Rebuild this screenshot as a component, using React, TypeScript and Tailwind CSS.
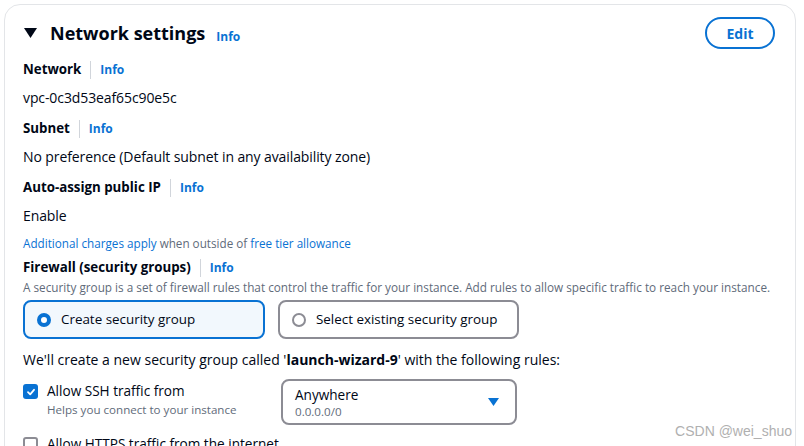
const font = { fontFamily: '"Open Sans", "Noto Sans", sans-serif' }

function Info() {
  return <span className="text-[12px] font-bold text-[#0972d3]">Info</span>
}

function Label({ text }: { text: string }) {
  return (
    <div className="flex items-center h-[22px]">
      <span className="text-[13.3px] font-bold text-[#000716]">{text}</span>
      <span className="mx-[9px] h-[18px] w-px bg-[#d1d5db]" />
      <Info />
    </div>
  )
}

function Field({ label, value }: { label: string; value: string }) {
  return (
    <div className="flex flex-col">
      <Label text={label} />
      <div className="mt-[6px] h-[22px] text-[14px] leading-[22px] text-[#000716] tracking-[-0.1px]">{value}</div>
    </div>
  )
}

export default function App() {
  return (
    <div className="w-[804px] h-[446px] overflow-hidden bg-white relative" style={font}>
      <div className="ml-[4px] mt-[4px] w-[792px] h-[520px] rounded-[16px] border border-[#e3e5e8] pl-[18px] pr-[19px] pt-[12px]">
        <div className="flex items-center justify-between">
          <div className="flex items-center">
            <svg width="13" height="10" viewBox="0 0 13 10" className="ml-[1px]">
              <path d="M0 0 H13 L6.5 10 Z" fill="#000716" />
            </svg>
            <span className="ml-[13px] text-[18px] font-bold text-[#000716] leading-[32px]">Network settings</span>
            <span className="ml-[11px] mt-[4px]"><Info /></span>
          </div>
          <button className="mr-[1px] h-[32px] w-[70px] rounded-full border-2 border-[#0972d3] text-[14px] font-bold text-[#0972d3]">
            Edit
          </button>
        </div>

        <div className="mt-[10px] flex flex-col gap-[9px]">
          <Field label="Network" value="vpc-0c3d53eaf65c90e5c" />
          <Field label="Subnet" value="No preference (Default subnet in any availability zone)" />
          <Field label="Auto-assign public IP" value="Enable" />
        </div>

        <div className="mt-[7px] text-[11.7px] leading-[18px] text-[#5f6b7a]">
          <span className="text-[#0972d3]">Additional charges apply</span> when outside of{" "}
          <span className="text-[#0972d3]">free tier allowance</span>
        </div>

        <div className="mt-[5px]">
          <Label text="Firewall (security groups)" />
          <div className="whitespace-nowrap text-[11.75px] leading-[16px] text-[#5f6b7a]">
            A security group is a set of firewall rules that control the traffic for your instance. Add rules to allow specific traffic to reach your instance.
          </div>
        </div>

        <div className="mt-[5px] flex gap-[13px]">
          <div className="flex h-[39px] w-[242px] items-center rounded-[8px] border-2 border-[#0972d3] bg-[#f2f8fd] pl-[12px]">
            <span className="h-[14px] w-[14px] rounded-full border-[4px] border-[#0972d3] bg-white" />
            <span className="ml-[10px] text-[13.4px] text-[#000716]">Create security group</span>
          </div>
          <div className="flex h-[39px] w-[241px] items-center rounded-[8px] border-2 border-[#8c8c94] bg-white pl-[12px]">
            <span className="h-[14px] w-[14px] rounded-full border-2 border-[#8c8c94] bg-white" />
            <span className="ml-[10px] text-[13.4px] text-[#000716]">Select existing security group</span>
          </div>
        </div>

        <div className="mt-[10px] text-[14px] leading-[22px] text-[#000716]">
          We'll create a new security group called '<span className="font-bold">launch-wizard-9</span>' with the following rules:
        </div>

        <div className="mt-[9px] flex">
          <div className="flex w-[258px]">
            <span className="mt-[4px] flex h-[15px] w-[15px] items-center justify-center rounded-[3px] bg-[#0972d3]">
              <svg width="10" height="10" viewBox="0 0 10 10">
                <path d="M2 5.2 L4.2 7.3 L8 2.8" fill="none" stroke="white" strokeWidth="1.8" strokeLinecap="round" strokeLinejoin="round" />
              </svg>
            </span>
            <div className="ml-[9px] flex flex-col">
              <span className="text-[13.6px] leading-[22px] text-[#000716]">Allow SSH traffic from</span>
              <span className="text-[11.6px] leading-[16px] text-[#5f6b7a]">Helps you connect to your instance</span>
            </div>
          </div>
          <div className="flex h-[46px] w-[236px] items-center justify-between rounded-[8px] border-2 border-[#8c8c94] pl-[12px] pr-[16px] -mt-[1px]">
            <div className="flex flex-col">
              <span className="text-[13.6px] leading-[20px] text-[#000716]">Anywhere</span>
              <span className="text-[11.6px] leading-[14px] text-[#5f6b7a]">0.0.0.0/0</span>
            </div>
            <svg width="11" height="8" viewBox="0 0 11 8">
              <path d="M0 0 H11 L5.5 8 Z" fill="#0972d3" />
            </svg>
          </div>
        </div>

        <div className="mt-[8px] flex">
          <span className="mt-[4px] h-[15px] w-[15px] rounded-[3px] border-2 border-[#8c8c94] bg-white" />
          <span className="ml-[9px] text-[13.6px] leading-[22px] text-[#000716]">Allow HTTPS traffic from the internet</span>
        </div>
      </div>

      <div className="absolute right-[12px] top-[421px] text-[14px] text-[#b0b0b0]" style={{ fontFamily: '"Liberation Sans", sans-serif' }}>
        CSDN @wei_shuo
      </div>
    </div>
  )
}
